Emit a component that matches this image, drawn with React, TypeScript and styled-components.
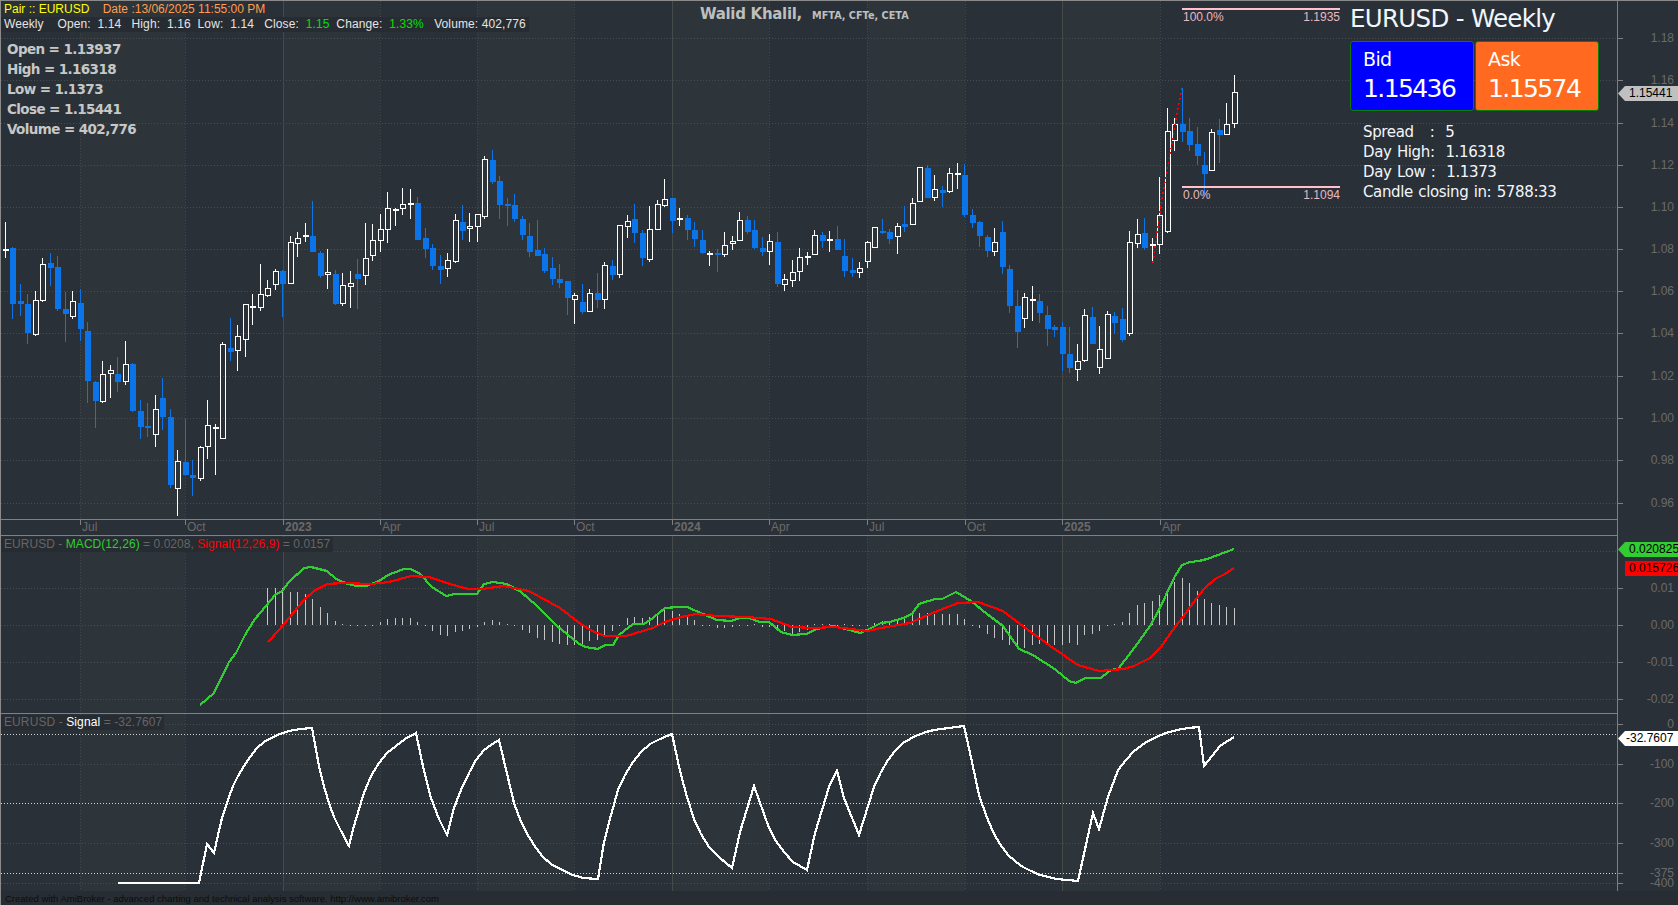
import styled, { createGlobalStyle } from "styled-components";

type Row = [number, number, number, number, number];

const GlobalStyle = createGlobalStyle`
  html, body {
    margin: 0;
    padding: 0;
    background: #2a3037;
  }
  text {
    font-family: "Liberation Sans", Arial, sans-serif;
    font-size: 12px;
  }
`;

// candles: [up, high, bodyTop, bodyBottom, low], y values are 1/3 px below the base line
const rowsA: Row[] = [
  [1,66,147,150,173],[0,141,144,312,357],[0,252,303,312,348],[0,282,312,399,432],[1,273,301,404,408],
  [1,174,193,302,306],[0,159,189,204,258],[0,168,201,327,333],[0,276,327,342,426],[1,273,304,350,357],
  [0,267,309,387,423],[0,366,393,543,609],[0,543,546,603,684],[1,483,523,606,609],[1,495,511,521,594],
  [0,471,522,546,576],[1,423,493,545,555],[0,489,492,633,636],[0,600,633,681,717],[0,609,678,684,711],
  [1,585,628,704,741],[0,534,594,651,690],[0,627,651,855,864],[1,750,784,866,948],[0,657,786,825,828],
  [0,780,825,834,888],[1,738,742,836,843],[1,600,676,740,777],[1,672,681,686,825],[1,426,433,716,716],
  [0,354,444,456,483],[1,375,409,452,513],[1,313,313,419,471],[1,282,318,321,375],[1,192,283,323,333],
  [1,240,265,287,290],[1,207,214,254,270],[0,210,213,252,351],[1,108,127,251,251],[1,96,115,131,171],
  [1,69,105,109,126],[0,3,108,156,156],[0,153,159,228,234],[1,147,217,224,267],[0,210,222,312,316],
  [1,219,256,311,318],[1,213,250,260,324],[0,177,222,237,327],[1,69,175,227,255],[1,72,121,167,183],
  [1,42,88,124,156],[1,-24,25,89,129],[1,24,27,30,78],[1,-36,13,28,45],[1,-33,10,14,57],[0,-10,9,120,120],
];
const rowsB: Row[] = [
  [0,294,324,357,384],[0,342,354,408,420],[0,375,408,420,462],[1,369,391,418,441],[1,252,271,395,399],
  [0,225,276,303,330],[1,249,289,296,336],[1,253,253,290,336],[1,78,88,260,267],[0,60,90,156,162],
  [0,138,153,225,267],[0,204,222,228,288],[0,192,225,267,276],[0,258,267,315,330],[0,279,318,366,381],
  [0,270,360,378,378],[0,354,372,423,429],[0,381,414,447,465],[0,402,447,459,474],[0,453,453,504,555],
  [1,489,496,509,582],[0,462,516,546,552],[1,477,490,545,545],[0,429,489,510,534],[1,396,406,509,537],
  [0,390,408,435,450],[1,286,286,434,444],[1,255,274,290,324],[0,222,267,309,339],[0,300,309,384,408],
  [1,228,298,389,396],[1,210,223,299,299],[1,147,208,227,231],[0,204,204,273,309],[1,234,265,271,288],
  [0,255,264,300,330],[0,276,300,327,351],[0,300,330,369,372],[1,363,369,372,408],[0,357,369,375,426],
  [1,306,346,376,381],[1,318,334,341,360],[1,246,271,334,334],[0,258,270,306,312],[0,270,300,354,357],
  [0,321,354,366,378],[1,312,334,367,405],[0,306,336,462,471],[1,432,448,464,483],[1,390,427,454,471],
  [1,354,382,427,453],[1,366,378,383,405],[1,300,316,376,376],[0,306,315,333,354],[1,303,327,331,366],
  [0,288,327,360,360],
];
const rowsC: Row[] = [
  [0,537,588,633,651],[0,594,630,639,651],[1,606,625,640,654],[1,543,547,607,624],[1,501,502,565,565],
  [0,477,514,519,522],[0,507,516,537,552],[1,489,499,532,582],[0,438,492,501,516],[1,414,430,496,496],
  [1,320,322,427,427],[0,315,324,414,414],[1,345,388,415,423],[0,378,390,399,441],[1,324,340,395,399],
  [1,309,339,343,387],[0,312,345,465,471],[0,447,465,489,504],[0,483,486,528,561],[0,525,531,573,591],
  [1,504,547,575,588],[0,483,516,621,642],[0,615,627,738,759],[0,690,738,816,864],[1,699,712,776,804],
  [1,678,717,720,783],[0,702,723,759,789],[0,738,765,807,858],[0,795,801,810,831],[0,786,801,882,933],
  [0,801,882,924,939],[1,852,904,929,963],[1,747,766,903,906],[0,741,771,852,852],[1,798,868,923,942],
  [1,753,763,896,896],[0,756,768,789,822],[0,744,777,840,846],[1,513,547,822,828],[1,477,523,551,564],
  [0,474,519,564,570],[1,534,553,559,603],[1,351,466,554,582],[1,144,214,515,519],[1,174,193,242,273],
  [0,84,192,216,246],[0,174,213,255,273],[0,201,252,288,315],[0,276,315,342,402],[1,207,217,332,332],
  [0,177,210,225,309],[1,129,193,224,224],[1,45,97,193,204],
];

const place = (base: number, rows: Row[]) =>
  rows.map(([up, hi, top, bot, lo]) => ({
    up: up === 1,
    hi: Math.round(base + hi / 3),
    top: Math.round(base + top / 3),
    bot: Math.round(base + bot / 3),
    lo: Math.round(base + lo / 3),
  }));

const candles = [...place(200, rowsA), ...place(130, rowsB), ...place(60, rowsC)];
const barX = (i: number) => Math.floor(5.3 + 7.495 * i);

// histogram height in px, first bar is candle 35
const histogram = [
  37,37,37,33,33,31,26,18,12,4,1,0.5,0,0.5,0.5,3,6,7,7,7,3,0.5,-6,-10,-11,-7,-6,-4,-1.5,3,5,3,1,0.5,
  -5,-8,-13,-15,-17,-19,-20,-20,-19,-16,-15,-10,-6,-1,7,8,7,8,11,15,14,11,9,5,0.5,0.5,-3,-3,-2,0,0,1,
  -2,-2,-4,-6,-9,-7,-5,1,1,1,-0.5,1,-0.5,-1,-1,2,4,4,6,7,10,12,12,11,11,11,11,6,0.5,-3,-9,-13,-15,-20,
  -24,-23,-20,-19,-20,-20,-20,-18,-20,-10,-9,-6,0.5,1,3,12,20,22,24,30,35,43,47,42,34,26,22,20,18,17,
];

const macdLine =
  "200,705 214,693 229,662 236,653 245,635 255,619 266,606 275,595 282,591 289,582 304,568 311,567 327,571 336,579 348,584 357,586 366,586 379,581 388,575 404,569 411,569 420,574 432,587 446,596 455,594 477,594 484,584 493,582 507,584 521,592 536,605 557,626 578,643 585,647 598,649 605,645 613,645 619,635 633,624 644,624 653,618 665,608 678,607 687,607 703,614 717,620 731,621 740,618 749,618 760,622 769,622 781,632 792,635 806,634 817,629 833,626 846,629 860,633 867,630 881,623 890,622 903,618 912,614 919,604 935,599 942,599 956,592 971,601 987,614 1003,626 1019,649 1033,655 1056,670 1069,681 1076,683 1085,678 1101,678 1108,672 1114,669 1118,669 1129,655 1140,640 1150,626 1159,610 1166,595 1175,576 1182,565 1190,562 1199,561 1207,559 1218,555 1234,549";
const signalLine =
  "268,642 279,630 289,618 304,600 314,591 327,584 343,583 371,584 389,582 411,576 429,577 450,584 468,589 482,589 504,586 529,591 560,608 578,622 592,631 605,636 626,636 653,628 665,622 681,617 696,614 717,616 746,617 771,619 792,627 814,628 835,627 867,631 881,628 910,623 935,612 958,603 978,602 1003,611 1024,627 1053,648 1078,665 1099,671 1124,669 1134,666 1150,658 1161,647 1172,631 1183,617 1193,603 1204,589 1215,579 1225,574 1234,568";
const strengthLine =
  "118,883 199,883 207,844 214,853 218,835 222,818 229,797 233,786 238,776 244,766 250,757 257,748 264,742 271,738 280,734 289,731 300,729 312,728 319,766 323,783 329,803 334,817 340,829 349,846 354,826 359,809 364,793 371,776 379,763 387,753 396,746 405,739 416,733 424,771 431,798 439,819 447,835 454,808 461,790 470,771 476,760 484,750 491,745 499,740 514,803 521,822 529,837 536,848 543,857 551,864 560,869 573,875 583,878 598,879 604,842 611,815 618,790 625,775 633,762 641,752 650,744 660,739 672,734 680,771 687,797 694,819 701,834 709,847 720,858 732,868 740,832 754,786 769,828 776,841 784,852 793,862 807,870 815,833 829,787 837,771 844,798 859,835 874,787 881,772 888,760 895,751 903,743 910,739 918,735 926,732 934,730 949,728 964,726 972,762 979,795 986,815 993,832 1000,844 1008,855 1015,861 1023,867 1031,871 1040,875 1057,879 1078,881 1093,813 1099,829 1108,797 1118,770 1126,760 1134,751 1145,743 1156,737 1166,733 1177,730 1188,728 1199,727 1204,766 1220,746 1234,737";
const fibTrend = "1153,263 1157,233 1163,193 1170,155 1173,138 1177,113 1182,88";

const quarters = [80, 185, 283, 380, 477, 574, 672, 769, 867, 965, 1062, 1160];
const lightBands = [[80, 185], [283, 380], [477, 574], [672, 769], [867, 965], [1062, 1160]];
const dateLabels = ["Jul", "Oct", "2023", "Apr", "Jul", "Oct", "2024", "Apr", "Jul", "Oct", "2025", "Apr"];
const isYear = (label: string) => label.length === 4;

const priceTicks: [number, string][] = [
  [38, "1.18"], [80, "1.16"], [123, "1.14"], [165, "1.12"], [207, "1.10"], [249, "1.08"],
  [291, "1.06"], [333, "1.04"], [376, "1.02"], [418, "1.00"], [460, "0.98"], [503, "0.96"],
];
const macdTicks: [number, string][] = [[588, "0.01"], [625, "0.00"], [662, "-0.01"], [699, "-0.02"]];
const strengthTicks: [number, string][] = [[724, "0"], [764, "-100"], [803, "-200"], [843, "-300"], [873, "-375"], [883, "-400"]];

const Page = styled.div`
  width: 1678px;
  height: 905px;
  box-sizing: border-box;
  border-top: 1px solid #8a8a8a;
  border-left: 1px solid #8a8a8a;
  background: #2a3037;
  display: flex;
  flex-direction: column;
  overflow: hidden;
  font-family: "Liberation Sans", Arial, sans-serif;
`;

const PaneRow = styled.div<{ $height: number }>`
  display: flex;
  height: ${(p) => p.$height}px;
  flex: none;
`;

const Plot = styled.div<{ $divider?: boolean }>`
  position: relative;
  width: 1617px;
  box-sizing: border-box;
  border-right: 1px solid #808080;
  border-bottom: ${(p) => (p.$divider ? "1px solid #808080" : "none")};
`;

const AxisColumn = styled.div`
  position: relative;
  width: 60px;
  overflow: hidden;
`;

const ChartSvg = styled.svg`
  display: block;
  shape-rendering: crispEdges;
`;

const AxisText = styled.text<{ $bold?: boolean }>`
  fill: #6a6a6a;
  font-weight: ${(p) => (p.$bold ? 700 : 400)};
`;

const FibText = styled.text`
  fill: #e8b9c0;
`;

const Legend = styled.div`
  position: absolute;
  left: 3px;
  top: 1px;
  font-size: 12px;
  line-height: 15px;
  white-space: pre;
`;

const LegendRow = styled.div`
  height: 15px;
`;

const LegendBar = styled.div<{ $width: number; $spacing?: number }>`
  width: ${(p) => p.$width}px;
  height: 15px;
  margin-left: -3px;
  padding-left: 3px;
  box-sizing: border-box;
  background: #272c32;
  letter-spacing: ${(p) => p.$spacing ?? 0.1}px;
`;

const Tone = styled.span<{ $color: string }>`
  color: ${(p) => p.$color};
`;

const StatsList = styled.div`
  margin: 7px 0 0 3px;
  font-family: "DejaVu Sans", sans-serif;
  font-weight: 700;
  font-size: 13.5px;
  line-height: 20px;
  letter-spacing: -0.6px;
  color: #c6c8c8;
`;

const Author = styled.div`
  position: absolute;
  left: 699px;
  top: 4px;
  display: flex;
  align-items: baseline;
  gap: 10px;
  color: #bdbfbf;
  font-family: "DejaVu Sans", sans-serif;
  font-weight: 700;
  white-space: nowrap;
`;

const AuthorName = styled.span`
  font-size: 15px;
  letter-spacing: -0.3px;
`;

const AuthorTitles = styled.span`
  font-size: 9.7px;
`;

const InfoPanel = styled.div`
  position: absolute;
  left: 1349px;
  top: 0;
  width: 250px;
  display: flex;
  flex-direction: column;
  color: #f2f6fb;
  font-family: "DejaVu Sans", sans-serif;
`;

const PanelTitle = styled.div`
  height: 40px;
  font-size: 24.5px;
  line-height: 35px;
  letter-spacing: -0.7px;
  white-space: nowrap;
`;

const Quotes = styled.div`
  display: flex;
  gap: 1px;
`;

const QuoteBox = styled.div<{ $bg: string }>`
  width: 124px;
  height: 70px;
  box-sizing: border-box;
  border: 1px solid #0b7d0b;
  border-radius: 3px;
  background: ${(p) => p.$bg};
  padding: 3px 0 0 12px;
  color: #fff;
`;

const QuoteName = styled.div`
  font-size: 19px;
  line-height: 28px;
  letter-spacing: -0.6px;
`;

const QuotePrice = styled.div`
  font-size: 25px;
  line-height: 31px;
  letter-spacing: -1.6px;
`;

const PanelStats = styled.div`
  margin-top: 11px;
  padding-left: 13px;
  font-size: 15px;
  line-height: 20px;
  letter-spacing: -0.37px;
  word-spacing: 1px;
  white-space: pre;
`;

const PriceTag = styled.div<{ $top: number; $bg: string; $pointed?: boolean; $pad?: number }>`
  position: absolute;
  left: ${(p) => (p.$pointed ? 0 : 7)}px;
  right: 0;
  top: ${(p) => p.$top}px;
  height: 15px;
  padding-left: ${(p) => p.$pad ?? 11}px;
  background: ${(p) => p.$bg};
  color: #000;
  font-size: 12px;
  line-height: 15px;
  white-space: nowrap;
  clip-path: ${(p) =>
    p.$pointed ? "polygon(0 50%, 7px 0, 100% 0, 100% 100%, 7px 100%)" : "none"};
`;

const Footer = styled.div`
  flex: 1;
  padding-left: 4px;
  background: #272d33;
  color: #0b0d0f;
  font-size: 9.5px;
  line-height: 16px;
  white-space: nowrap;
  overflow: hidden;
`;

const Backdrop = ({ top, height }: { top: number; height: number }) => (
  <>
    {lightBands.map(([from, to]) => (
      <rect key={from} x={from} y={top} width={to - from} height={height} fill="#2d353b" />
    ))}
    {quarters.map((x, i) => (
      <line
        key={x}
        x1={x + 0.5}
        x2={x + 0.5}
        y1={top}
        y2={top + height}
        stroke={isYear(dateLabels[i]) ? "#474a4b" : "#43484a"}
        strokeDasharray={isYear(dateLabels[i]) ? undefined : "1 2"}
      />
    ))}
  </>
);

const GridLines = ({ ys, stroke = "#484d4c" }: { ys: number[]; stroke?: string }) => (
  <>
    {ys.map((y) => (
      <line key={y} x1={1} x2={1617} y1={y + 0.5} y2={y + 0.5} stroke={stroke} strokeDasharray="1 2" />
    ))}
  </>
);

const Scale = ({ top, height, ticks }: { top: number; height: number; ticks: [number, string][] }) => (
  <ChartSvg width={60} height={height} viewBox={`0 ${top} 60 ${height}`}>
    {ticks.map(([y, label]) => (
      <g key={label}>
        <line x1={0} x2={5} y1={y + 0.5} y2={y + 0.5} stroke="#808080" />
        <AxisText x={56} y={y + 4} textAnchor="end">{label}</AxisText>
      </g>
    ))}
  </ChartSvg>
);

const Candles = () => (
  <>
    {candles.map((c, i) => {
      const x = barX(i);
      const color = c.up ? "#ffffff" : "#0a74e8";
      return (
        <g key={i}>
          <rect x={x} y={c.hi} width={1} height={Math.max(c.top - c.hi, 0)} fill={color} />
          <rect x={x} y={c.bot} width={1} height={Math.max(c.lo - c.bot, 0)} fill={color} />
          {c.up ? (
            <rect
              x={x - 1.5}
              y={c.top + 0.5}
              width={5}
              height={Math.max(c.bot - c.top - 1, 1)}
              fill="none"
              stroke={color}
            />
          ) : (
            <rect x={x - 2} y={c.top} width={6} height={Math.max(c.bot - c.top, 2)} fill={color} />
          )}
        </g>
      );
    })}
  </>
);

const MainChart = () => (
  <ChartSvg width={1616} height={518} viewBox="1 1 1616 518">
    <Backdrop top={1} height={518} />
    <GridLines ys={priceTicks.map(([y]) => y)} />
    <Candles />
    <polyline points={fibTrend} fill="none" stroke="#ff0000" strokeWidth={1.5} strokeDasharray="2 3" />
    <rect x={1182} y={8} width={158} height={2} fill="#ffc0cb" />
    <rect x={1182} y={186} width={158} height={2} fill="#ffc0cb" />
    <FibText x={1183} y={21}>100.0%</FibText>
    <FibText x={1340} y={21} textAnchor="end">1.1935</FibText>
    <FibText x={1183} y={199}>0.0%</FibText>
    <FibText x={1340} y={199} textAnchor="end">1.1094</FibText>
  </ChartSvg>
);

const DateAxis = () => (
  <ChartSvg width={1616} height={15} viewBox="1 520 1616 15">
    {quarters.map((x, i) => (
      <g key={x}>
        <line x1={x + 0.5} x2={x + 0.5} y1={520} y2={525} stroke="#808080" />
        <AxisText x={x + 2} y={531} $bold={isYear(dateLabels[i])}>{dateLabels[i]}</AxisText>
      </g>
    ))}
  </ChartSvg>
);

const MacdChart = () => (
  <ChartSvg width={1616} height={177} viewBox="1 536 1616 177">
    <Backdrop top={536} height={177} />
    <GridLines ys={[551, 588, 625, 662, 699]} />
    {histogram.map((h, i) => (
      <rect
        key={i}
        x={barX(i + 35)}
        y={h > 0 ? 625 - h : 625}
        width={1}
        height={Math.max(Math.abs(h), 1)}
        fill="#c4c6c6"
      />
    ))}
    <polyline points={macdLine} fill="none" stroke="#32cd32" strokeWidth={2.2} />
    <polyline points={signalLine} fill="none" stroke="#ff0000" strokeWidth={2.2} />
  </ChartSvg>
);

const StrengthChart = () => (
  <ChartSvg width={1616} height={177} viewBox="1 714 1616 177">
    <Backdrop top={714} height={177} />
    <GridLines ys={[724, 764, 843, 883]} />
    <GridLines ys={[734, 803, 873]} stroke="#cfd2d2" />
    <polyline points={strengthLine} fill="none" stroke="#ffffff" strokeWidth={2.2} />
  </ChartSvg>
);

export default function App() {
  return (
    <Page>
      <GlobalStyle />
      <PaneRow $height={519}>
        <Plot $divider>
          <MainChart />
          <Legend>
            <LegendRow>
              <Tone $color="#ffff00">Pair :: EURUSD</Tone>
              <Tone $color="#ff9c4f">{"    Date :13/06/2025 11:55:00 PM"}</Tone>
            </LegendRow>
            <LegendBar $width={528}>
              <Tone $color="#e4e4e4">{"Weekly    Open:  1.14   High:  1.16  Low:  1.14   Close:  "}</Tone>
              <Tone $color="#00e000">1.15</Tone>
              <Tone $color="#e4e4e4">{"  Change:  "}</Tone>
              <Tone $color="#00e000">1.33%</Tone>
              <Tone $color="#e4e4e4">{"   Volume: 402,776"}</Tone>
            </LegendBar>
            <StatsList>
              <div>Open = 1.13937</div>
              <div>High = 1.16318</div>
              <div>Low = 1.1373</div>
              <div>Close = 1.15441</div>
              <div>Volume = 402,776</div>
            </StatsList>
          </Legend>
          <Author>
            <AuthorName>Walid Khalil,</AuthorName>
            <AuthorTitles>MFTA, CFTe, CETA</AuthorTitles>
          </Author>
          <InfoPanel>
            <PanelTitle>EURUSD - Weekly</PanelTitle>
            <Quotes>
              <QuoteBox $bg="#0000ff">
                <QuoteName>Bid</QuoteName>
                <QuotePrice>1.15436</QuotePrice>
              </QuoteBox>
              <QuoteBox $bg="#ff6a20">
                <QuoteName>Ask</QuoteName>
                <QuotePrice>1.15574</QuotePrice>
              </QuoteBox>
            </Quotes>
            <PanelStats>
              <div>{"Spread   :  5"}</div>
              <div>{"Day High:  1.16318"}</div>
              <div>{"Day Low :  1.1373"}</div>
              <div>Candle closing in: 5788:33</div>
            </PanelStats>
          </InfoPanel>
        </Plot>
        <AxisColumn>
          <Scale top={1} height={519} ticks={priceTicks} />
          <PriceTag $top={85} $bg="#c0c0c0" $pointed>1.15441</PriceTag>
        </AxisColumn>
      </PaneRow>

      <PaneRow $height={16}>
        <Plot $divider>
          <DateAxis />
        </Plot>
        <AxisColumn />
      </PaneRow>

      <PaneRow $height={178}>
        <Plot $divider>
          <MacdChart />
          <Legend>
            <LegendBar $width={332} $spacing={0.05}>
              <Tone $color="#666">{"EURUSD - "}</Tone>
              <Tone $color="#32cd32">MACD(12,26)</Tone>
              <Tone $color="#666">{" = 0.0208, "}</Tone>
              <Tone $color="#ff0000">Signal(12,26,9)</Tone>
              <Tone $color="#666">{" = 0.0157"}</Tone>
            </LegendBar>
          </Legend>
        </Plot>
        <AxisColumn>
          <Scale top={536} height={178} ticks={macdTicks} />
          <PriceTag $top={6} $bg="#32cd32" $pointed>0.020825</PriceTag>
          <PriceTag $top={25} $bg="#ff0000" $pad={4}>0.015726</PriceTag>
        </AxisColumn>
      </PaneRow>

      <PaneRow $height={177}>
        <Plot>
          <StrengthChart />
          <Legend>
            <LegendBar $width={163}>
              <Tone $color="#666">{"EURUSD - "}</Tone>
              <Tone $color="#fff">Signal</Tone>
              <Tone $color="#666">{" = -32.7607"}</Tone>
            </LegendBar>
          </Legend>
        </Plot>
        <AxisColumn>
          <Scale top={714} height={177} ticks={strengthTicks} />
          <PriceTag $top={17} $bg="#ffffff" $pointed $pad={8}>-32.7607</PriceTag>
        </AxisColumn>
      </PaneRow>

      <Footer>Created with AmiBroker - advanced charting and technical analysis software. http://www.amibroker.com</Footer>
    </Page>
  );
}
